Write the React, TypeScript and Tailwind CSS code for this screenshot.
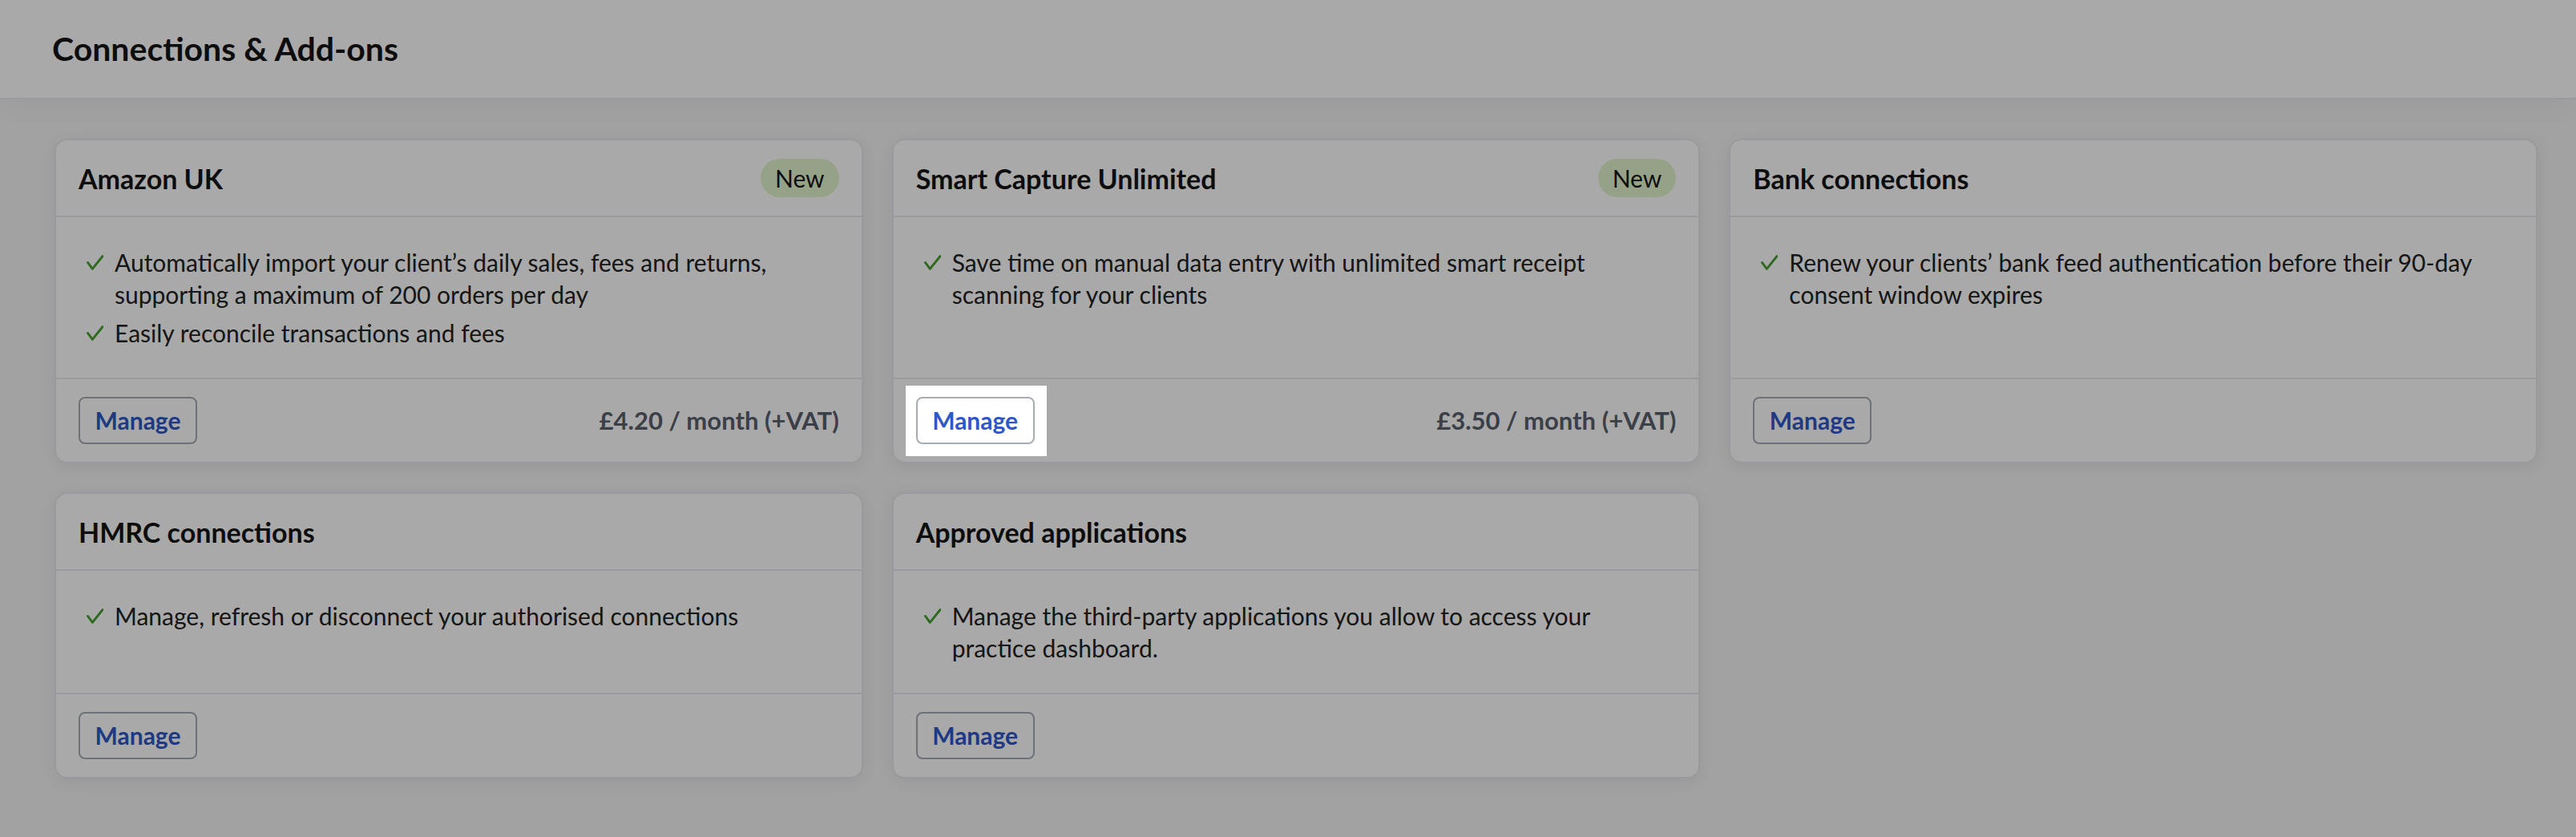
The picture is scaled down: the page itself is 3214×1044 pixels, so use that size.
import { FC } from "react";

type Addon = {
  title: string;
  isNew?: boolean;
  points: string[];
  price?: string;
  highlight?: boolean;
};

const addons: Addon[] = [
  {
    title: "Amazon UK",
    isNew: true,
    points: [
      "Automatically import your client’s daily sales, fees and returns, supporting a maximum of 200 orders per day",
      "Easily reconcile transactions and fees",
    ],
    price: "£4.20 / month (+VAT)",
  },
  {
    title: "Smart Capture Unlimited",
    isNew: true,
    points: [
      "Save time on manual data entry with unlimited smart receipt scanning for your clients",
    ],
    price: "£3.50 / month (+VAT)",
    highlight: true,
  },
  {
    title: "Bank connections",
    points: [
      "Renew your clients’ bank feed authentication before their 90-day consent window expires",
    ],
  },
  {
    title: "HMRC connections",
    points: ["Manage, refresh or disconnect your authorised connections"],
  },
  {
    title: "Approved applications",
    points: [
      "Manage the third-party applications you allow to access your practice dashboard.",
    ],
  },
];

const Check: FC = () => (
  <svg
    width="21"
    height="19"
    viewBox="0 0 20 18"
    className="shrink-0 mt-[11px]"
    fill="none"
  >
    <path
      d="M1.5 9 L7 16.5 L19 1.5"
      stroke="#44a02f"
      strokeWidth="2.8"
      strokeLinecap="round"
      strokeLinejoin="round"
    />
  </svg>
);

const AddonCard: FC<{ addon: Addon }> = ({ addon }) => {
  return (
    <div className="flex flex-col rounded-[16px] border-2 border-[#e9e9ef] bg-white shadow-[0_4px_20px_rgba(0,0,0,0.07)]">
      <div className="h-[96px] px-[28px] flex items-center justify-between border-b-2 border-[#e9e9ef]">
        <h2 className="text-[34px] font-bold text-[#141414]">
          {addon.title}
        </h2>
        {addon.isNew && (
          <span className="h-[48px] px-[18px] rounded-full bg-[#e3f5cc] text-[30px] text-[#151515] flex items-center">
            New
          </span>
        )}
      </div>
      <div className="flex-1 px-[28px] py-[36px]">
        <ul className="flex flex-col gap-[8px] pl-[10px]">
          {addon.points.map((p) => (
            <li
              key={p}
              className="flex items-start gap-[14px] text-[30px] leading-[40px] text-[#222]"
            >
              <Check />
              <span className="max-w-[885px]">{p}</span>
            </li>
          ))}
        </ul>
      </div>
      <div className="h-[105px] px-[28px] flex items-center justify-between border-t-2 border-[#e9e9ef]">
        <div className="relative">
          <button className="h-[59px] w-[148px] rounded-[8px] border-2 border-[#a7acb4] bg-white text-[30px] font-bold text-[#2f57c6]">
            Manage
          </button>
          {addon.highlight && (
            <div className="absolute -top-[14px] -left-[13px] -right-[15px] -bottom-[15px] z-10 pointer-events-none shadow-[0_0_0_9999px_rgba(0,0,0,0.337)]" />
          )}
        </div>
        {addon.price && (
          <p className="text-[31px] font-bold text-[#59606b]">
            {addon.price}
          </p>
        )}
      </div>
    </div>
  );
};

const App: FC = () => {
  return (
    <div
      className="min-h-screen bg-[#f4f4f5] overflow-hidden"
      style={{ fontFamily: "Lato, 'Open Sans', sans-serif" }}
    >
      <div className="h-[124px] bg-white border-b-2 border-[#eaeaf0] px-[65px] flex items-center shadow-[0_6px_30px_rgba(0,0,0,0.05)]">
        <h1 className="text-[41px] font-bold text-[#141414]">
          Connections &amp; Add-ons
        </h1>
      </div>
      <div className="pt-[49px] pb-[60px] pl-[68px] pr-[48px] grid grid-cols-3 gap-[36px]">
        {addons.map((a) => (
          <AddonCard key={a.title} addon={a} />
        ))}
      </div>
    </div>
  );
};

export default App;
